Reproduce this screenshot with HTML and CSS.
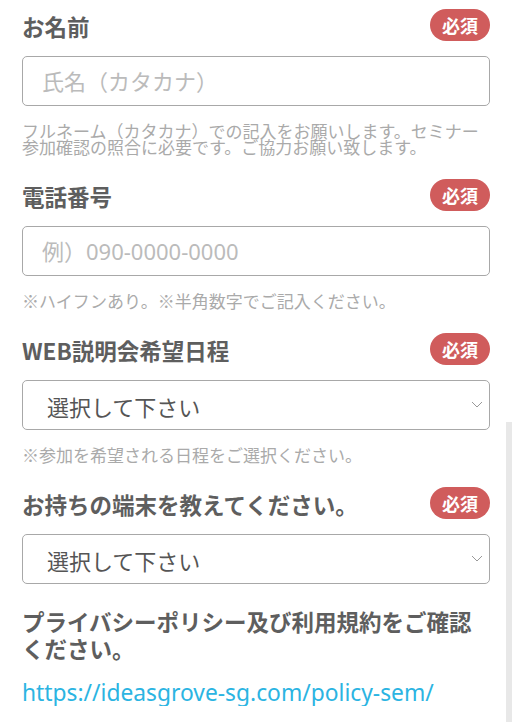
FILE: index.html
```html
<!DOCTYPE html>
<html lang="ja">
<head>
<meta charset="UTF-8" />
<meta name="viewport" content="width=device-width, initial-scale=1" />
<title>WEB説明会 お申し込み</title>
<link rel="stylesheet" href="styles.css">
</head>
<body>

<form class="entry-form">
  <div class="field">
    <div class="field-head">
      <label class="field-label" for="name">お名前</label>
      <span class="badge">必須</span>
    </div>
    <input class="field-input" type="text" id="name" placeholder="氏名（カタカナ）" />
    <p class="field-note">フルネーム（カタカナ）での記入をお願いします。セミナー参加確認の照合に必要です。ご協力お願い致します。</p>
  </div>

  <div class="field">
    <div class="field-head">
      <label class="field-label" for="tel">電話番号</label>
      <span class="badge">必須</span>
    </div>
    <input class="field-input" type="tel" id="tel" placeholder="例）090-0000-0000" />
    <p class="field-note">※ハイフンあり。※半角数字でご記入ください。</p>
  </div>

  <div class="field">
    <div class="field-head">
      <label class="field-label" for="date">WEB説明会希望日程</label>
      <span class="badge">必須</span>
    </div>
    <div class="select-wrap">
      <select class="field-select" id="date">
        <option>選択して下さい</option>
      </select>
      <svg class="chevron" width="12" height="7" viewBox="0 0 12 7"><path d="M1 1 L6 6 L11 1" fill="none" stroke="#999" stroke-width="1"/></svg>
    </div>
    <p class="field-note">※参加を希望される日程をご選択ください。</p>
  </div>

  <div class="field">
    <div class="field-head">
      <label class="field-label" for="device">お持ちの端末を教えてください。</label>
      <span class="badge">必須</span>
    </div>
    <div class="select-wrap">
      <select class="field-select" id="device">
        <option>選択して下さい</option>
      </select>
      <svg class="chevron" width="12" height="7" viewBox="0 0 12 7"><path d="M1 1 L6 6 L11 1" fill="none" stroke="#999" stroke-width="1"/></svg>
    </div>
  </div>

  <div class="policy">
    <p class="policy-title">プライバシーポリシー及び利用規約をご確認ください。</p>
    <a class="policy-link" href="#">https://ideasgrove-sg.com/policy-sem/</a>
  </div>
</form>

<div class="scroll-thumb"></div>

</body>
</html>
```

FILE: styles.css
```css
body { margin: 0; padding: 9px 22px 0; background: #fff; color: #555; font-family: "Noto Sans CJK JP", sans-serif; overflow: hidden; }
p { margin: 0; }

.field { margin-bottom: 24px; }
.field-head { display: flex; justify-content: space-between; align-items: center; height: 32px; }
.field-label { padding-top: 2px; font-size: 22.5px; font-weight: 700; color: #5e5e5e; line-height: 32px; }
.badge { display: inline-flex; align-items: center; justify-content: center; width: 60px; height: 32px; border-radius: 16px; background: #d05c5c; color: #fff; font-size: 18px; font-weight: 700; line-height: 1; }

.field-input, .field-select { display: block; box-sizing: border-box; width: 100%; height: 50px; margin-top: 15px; border: 1px solid #a8a8a8; border-radius: 5px; background: #fff; }
.field-input { padding: 0 19px; font-family: "Noto Sans", "Noto Sans CJK JP", sans-serif; font-size: 22px; color: #555; }
.field-input::placeholder { color: #bbb; }
.field-select { -webkit-appearance: none; appearance: none; padding: 2px 24px 0; font-family: "Noto Sans CJK JP", sans-serif; font-size: 22px; color: #555; }

.select-wrap { position: relative; }
.chevron { position: absolute; right: 7px; top: 21px; }

.field-note { margin-top: 17px; font-size: 17px; line-height: 16px; color: #aaa; }

.policy { margin-top: 21px; }
.policy-title { font-size: 22.5px; font-weight: 700; line-height: 27px; color: #5e5e5e; }
.policy-link { display: block; margin-top: 17px; font-family: "Noto Sans", sans-serif; font-size: 22.8px; line-height: 27px; color: #2bb4e2; text-decoration: none; }

.scroll-thumb { position: absolute; right: 0; top: 422px; width: 6px; height: 300px; background: #e8e8e8; }
```
